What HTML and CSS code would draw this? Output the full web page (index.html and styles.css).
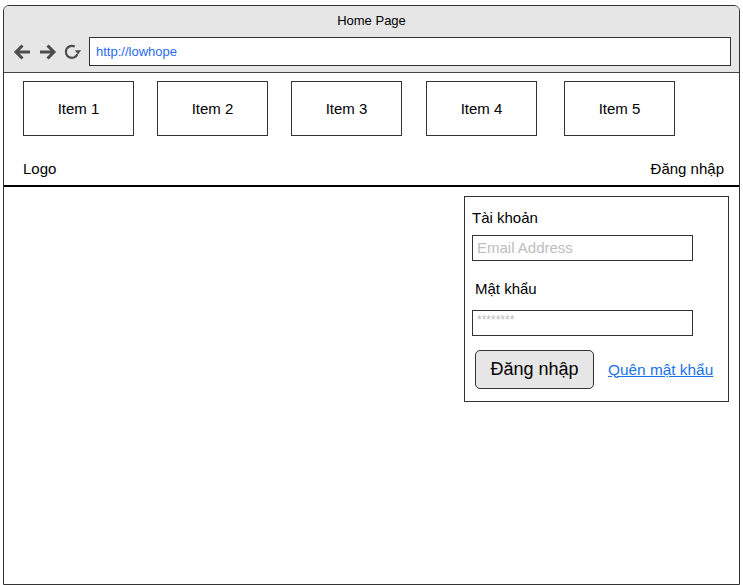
FILE: index.html
```html
<!DOCTYPE html>
<html>
<head>
<meta charset="utf-8">
<link rel="stylesheet" href="styles.css">
</head>
<body>
<div class="frame">
  <div class="chrome">
    <div class="title">Home Page</div>
    <div class="navrow">
      <svg class="ico" width="20" height="20" viewBox="0 0 20 20"><path d="M18 10H4M10.5 3.5L4 10L10.5 16.5" fill="none" stroke="#4d4d4d" stroke-width="3"/></svg>
      <svg class="ico" width="20" height="20" viewBox="0 0 20 20"><path d="M2 10H16M9.5 3.5L16 10L9.5 16.5" fill="none" stroke="#4d4d4d" stroke-width="3"/></svg>
      <svg class="ico refresh" width="18" height="20" viewBox="0 0 18 20"><path d="M13.4 12.2A6 6 0 1 1 10.8 4.6" fill="none" stroke="#4d4d4d" stroke-width="2.2"/><path d="M10.8 8.2L17.2 8.2L14 12.6Z" fill="#4d4d4d"/></svg>
      <div class="address">http://lowhope</div>
    </div>
  </div>
  <div class="content">
    <div class="items">
      <div class="item">Item 1</div>
      <div class="item">Item 2</div>
      <div class="item">Item 3</div>
      <div class="item item4">Item 4</div>
      <div class="item item5">Item 5</div>
    </div>
    <div class="header">
      <span>Logo</span>
      <span>Đăng nhập</span>
    </div>
    <div class="main">
      <div class="login">
        <div class="label">Tài khoản</div>
        <div class="input email">Email Address</div>
        <div class="label label2">Mật khẩu</div>
        <div class="input pass">********</div>
        <div class="actions">
          <div class="btn">Đăng nhập</div>
          <a class="link" href="#">Quên mật khẩu</a>
        </div>
      </div>
    </div>
  </div>
</div>
</body>
</html>
```
FILE: styles.css
```css
* { box-sizing: border-box; }
body {
  margin: 0;
  font-family: "Liberation Sans", Arial, sans-serif;
  color: #000;
  background: #fff;
}
.frame {
  margin: 5px 0 0 3px;
  width: 737px;
  height: 580px;
  border: 1px solid #333;
  border-radius: 6px 6px 0 0;
  overflow: hidden;
  display: flex;
  flex-direction: column;
}
.chrome {
  background: #e6e6e6;
  height: 67px;
  border-bottom: 1px solid #444;
  padding-top: 7px;
}
.title {
  text-align: center;
  font-size: 13px;
  line-height: 16px;
}
.navrow {
  display: flex;
  align-items: center;
  margin-top: 8px;
  padding-left: 8px;
}
.ico { display: block; }
.ico + .ico { margin-left: 6px; }
.refresh { margin-left: 7px; }
.address {
  margin-left: 7px;
  width: 642px;
  height: 29px;
  border: 1px solid #333;
  background: #fff;
  font-size: 13px;
  line-height: 27px;
  padding-left: 6px;
  color: #2a6af0;
}
.content {
  flex: 1;
  display: flex;
  flex-direction: column;
}
.items {
  display: flex;
  padding: 8px 0 0 19px;
  gap: 23px;
}
.item {
  width: 111px;
  height: 55px;
  border: 1px solid #333;
  display: flex;
  align-items: center;
  justify-content: center;
  font-size: 15px;
}
.item4 { margin-left: 1px; }
.item5 { margin-left: 4px; }
.header {
  display: flex;
  justify-content: space-between;
  padding: 23px 15px 6px 19px;
  font-size: 15px;
  line-height: 20px;
  border-bottom: 2px solid #000;
}
.main {
  display: flex;
  justify-content: flex-end;
  padding: 9px 10px 0 0;
}
.login {
  width: 265px;
  height: 206px;
  border: 1px solid #333;
  padding: 12px 0 0 7px;
}
.label {
  font-size: 15px;
  line-height: 18px;
}
.label2 { margin: 19px 0 0 3px; }
.input {
  margin-top: 8px;
  width: 221px;
  height: 26px;
  border: 1px solid #333;
  padding-left: 4px;
  color: #bdbdbd;
}
.email {
  font-size: 15px;
  line-height: 24px;
}
.pass {
  margin-top: 12px;
  font-size: 12px;
  line-height: 18px;
}
.actions {
  display: flex;
  align-items: center;
  margin: 14px 0 0 3px;
}
.btn {
  width: 119px;
  height: 39px;
  border: 1px solid #333;
  border-radius: 5px;
  background: #e6e6e6;
  font-size: 18px;
  display: flex;
  align-items: center;
  justify-content: center;
}
.link {
  margin-left: 14px;
  font-size: 15.4px;
  color: #1a73e8;
  text-decoration: underline;
}
```
